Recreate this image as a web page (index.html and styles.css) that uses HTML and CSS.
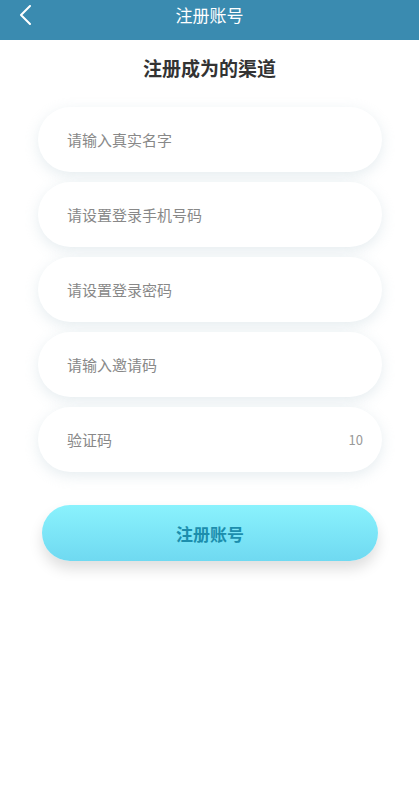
FILE: index.html
```html
<!DOCTYPE html>
<html>

<head>
	<meta charset="utf-8">
	<link rel="stylesheet" href="styles.css">
</head>

<body>
	<div class="header">
		<svg class="back" width="14" height="20" viewBox="0 0 14 20">
			<polyline points="11,1 2,10 11,19" fill="none" stroke="#fff" stroke-width="2" stroke-linecap="round" stroke-linejoin="round" />
		</svg>
		<span class="header-title">注册账号</span>
	</div>
	<h1 class="title">注册成为的渠道</h1>
	<div class="form">
		<div class="field">请输入真实名字</div>
		<div class="field">请设置登录手机号码</div>
		<div class="field">请设置登录密码</div>
		<div class="field">请输入邀请码</div>
		<div class="field"><span>验证码</span><span class="count">10</span></div>
	</div>
	<button class="submit">注册账号</button>
</body>

</html>
```
FILE: styles.css
```css
body {
	font-family: "Noto Sans CJK SC", "Noto Sans", sans-serif;
	background-color: #fff;
	margin: 0;
	padding: 0 0 40px 0;
}

.header {
	height: 40px;
	background-color: #3a8bb0;
	display: flex;
	align-items: center;
	justify-content: center;
	position: relative;
}

.back {
	position: absolute;
	left: 19px;
	top: 5px;
}

.header-title {
	color: #fff;
	font-size: 17px;
	margin-top: -11px;
}

.title {
	margin: 14px 0 0 0;
	text-align: center;
	font-size: 19px;
	font-weight: bold;
	color: #333;
	line-height: 28px;
}

.form {
	display: flex;
	flex-direction: column;
	gap: 10px;
	margin: 25px 37px 0 38px;
}

.field {
	height: 65px;
	border-radius: 33px;
	background-color: #fff;
	box-shadow: 0 4px 14px rgba(200, 215, 222, 0.45);
	display: flex;
	align-items: center;
	justify-content: space-between;
	padding: 0 19px 0 29px;
	font-size: 15px;
	color: #888;
}

.count {
	font-size: 13px;
	color: #999;
}

.submit {
	display: block;
	margin: 33px 41px 0 42px;
	width: 336px;
	height: 56px;
	border: none;
	border-radius: 28px;
	background: linear-gradient(#8af2fd, #6fd9f1);
	box-shadow: 0 8px 14px rgba(0, 0, 0, 0.13);
	font-family: "Noto Sans CJK SC", "Noto Sans", sans-serif;
	font-size: 17px;
	font-weight: bold;
	color: #1c8ead;
}
```
